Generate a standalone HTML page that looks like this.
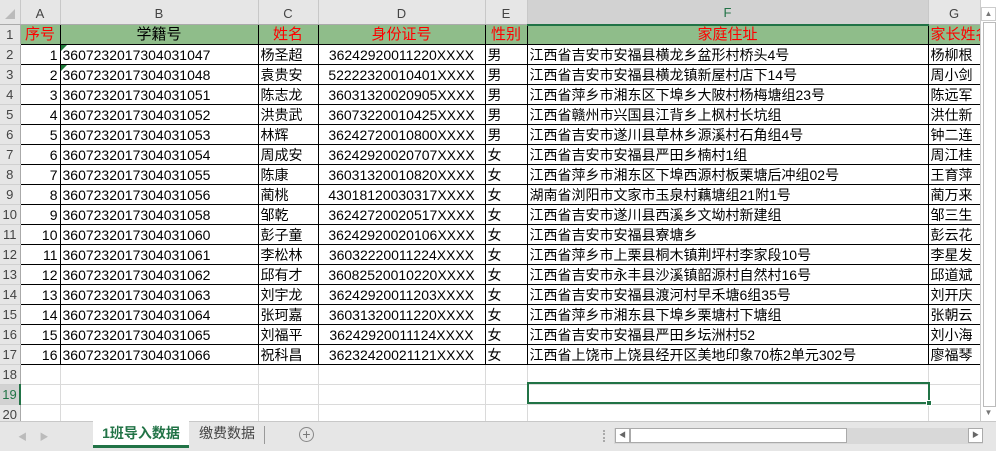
<!DOCTYPE html>
<html><head><meta charset="utf-8"><style>
*{margin:0;padding:0;box-sizing:border-box}
body{width:996px;height:451px;overflow:hidden;background:#fff;font-family:"Liberation Sans","Noto Sans CJK SC",sans-serif;position:relative}
table{position:absolute;left:0;top:0;border-collapse:collapse;table-layout:fixed;width:980px}
td{height:20px;font-size:14px;line-height:18px;white-space:nowrap;overflow:hidden;padding:0 2px;color:#000}
tr.ch td{height:23px;background:#e6e6e6;color:#444;text-align:center;font-size:13px;border-right:1px solid #c8c8c8;border-bottom:1px solid #aaa;padding-top:3px}
td.rh{background:#e6e6e6;color:#444;text-align:center;font-size:13px;padding:0;border-right:1px solid #aaa;border-bottom:1px solid #d0d0d0}
tr.h td{background:#8fbd8a;color:#f00;text-align:center;border:1px solid #000;font-size:15px}
tr.h td.rh{background:#e6e6e6;color:#444;border:none;border-right:1px solid #aaa;border-bottom:1px solid #d0d0d0;font-size:13px}
tr.d td{border:1px solid #000}
tr.d td.rh{border:none;border-right:1px solid #aaa;border-bottom:1px solid #d0d0d0}
tr.e td{border-right:1px solid #dadada;border-bottom:1px solid #dadada}
tr.e td.rh{border-right:1px solid #aaa;border-bottom:1px solid #d0d0d0}
.r{text-align:right}.c{text-align:center}
.tri{position:relative}
.tri:before{content:"";position:absolute;left:0;top:0;border-top:6px solid #1f7a3a;border-right:6px solid transparent}
</style></head><body>
<table>
<colgroup><col style="width:20px"><col style="width:40px"><col style="width:198px"><col style="width:60px"><col style="width:167px"><col style="width:42px"><col style="width:401px"><col style="width:52px"></colgroup>
<tr class="ch"><td style="background:#e6e6e6"><span style="display:inline-block;border-left:10px solid transparent;border-bottom:10px solid #bbb;margin-top:6px"></span></td><td>A</td><td>B</td><td>C</td><td>D</td><td>E</td><td style="background:#d2d2d2;border-bottom:2px solid #217346;color:#217346">F</td><td>G</td></tr>
<tr class="h"><td class="rh">1</td><td>序号</td><td style="color:#000">学籍号</td><td>姓名</td><td>身份证号</td><td>性别</td><td>家庭住址</td><td style="text-align:left">家长姓名</td></tr>
<tr class="d"><td class="rh">2</td><td class="r">1</td><td class="tri">3607232017304031047</td><td>杨圣超</td><td class="c">36242920011220XXXX</td><td>男</td><td>江西省吉安市安福县横龙乡盆形村桥头4号</td><td>杨柳根</td></tr>
<tr class="d"><td class="rh">3</td><td class="r">2</td><td class="tri">3607232017304031048</td><td>袁贵安</td><td class="c">52222320010401XXXX</td><td>男</td><td>江西省吉安市安福县横龙镇新屋村店下14号</td><td>周小剑</td></tr>
<tr class="d"><td class="rh">4</td><td class="r">3</td><td>3607232017304031051</td><td>陈志龙</td><td class="c">36031320020905XXXX</td><td>男</td><td>江西省萍乡市湘东区下埠乡大陂村杨梅塘组23号</td><td>陈远军</td></tr>
<tr class="d"><td class="rh">5</td><td class="r">4</td><td>3607232017304031052</td><td>洪贵武</td><td class="c">36073220010425XXXX</td><td>男</td><td>江西省赣州市兴国县江背乡上枫村长坑组</td><td>洪仕新</td></tr>
<tr class="d"><td class="rh">6</td><td class="r">5</td><td>3607232017304031053</td><td>林辉</td><td class="c">36242720010800XXXX</td><td>男</td><td>江西省吉安市遂川县草林乡源溪村石角组4号</td><td>钟二连</td></tr>
<tr class="d"><td class="rh">7</td><td class="r">6</td><td>3607232017304031054</td><td>周成安</td><td class="c">36242920020707XXXX</td><td>女</td><td>江西省吉安市安福县严田乡楠村1组</td><td>周江桂</td></tr>
<tr class="d"><td class="rh">8</td><td class="r">7</td><td>3607232017304031055</td><td>陈康</td><td class="c">36031320010820XXXX</td><td>女</td><td>江西省萍乡市湘东区下埠西源村板栗塘后冲组02号</td><td>王育萍</td></tr>
<tr class="d"><td class="rh">9</td><td class="r">8</td><td>3607232017304031056</td><td>蔺桃</td><td class="c">43018120030317XXXX</td><td>女</td><td>湖南省浏阳市文家市玉泉村藕塘组21附1号</td><td>蔺万来</td></tr>
<tr class="d"><td class="rh">10</td><td class="r">9</td><td>3607232017304031058</td><td>邹乾</td><td class="c">36242720020517XXXX</td><td>女</td><td>江西省吉安市遂川县西溪乡文坳村新建组</td><td>邹三生</td></tr>
<tr class="d"><td class="rh">11</td><td class="r">10</td><td>3607232017304031060</td><td>彭子童</td><td class="c">36242920020106XXXX</td><td>女</td><td>江西省吉安市安福县寮塘乡</td><td>彭云花</td></tr>
<tr class="d"><td class="rh">12</td><td class="r">11</td><td>3607232017304031061</td><td>李松林</td><td class="c">36032220011224XXXX</td><td>女</td><td>江西省萍乡市上栗县桐木镇荆坪村李家段10号</td><td>李星发</td></tr>
<tr class="d"><td class="rh">13</td><td class="r">12</td><td>3607232017304031062</td><td>邱有才</td><td class="c">36082520010220XXXX</td><td>女</td><td>江西省吉安市永丰县沙溪镇韶源村自然村16号</td><td>邱道斌</td></tr>
<tr class="d"><td class="rh">14</td><td class="r">13</td><td>3607232017304031063</td><td>刘宇龙</td><td class="c">36242920011203XXXX</td><td>女</td><td>江西省吉安市安福县渡河村早禾塘6组35号</td><td>刘开庆</td></tr>
<tr class="d"><td class="rh">15</td><td class="r">14</td><td>3607232017304031064</td><td>张珂嘉</td><td class="c">36031320011220XXXX</td><td>女</td><td>江西省萍乡市湘东县下埠乡栗塘村下塘组</td><td>张朝云</td></tr>
<tr class="d"><td class="rh">16</td><td class="r">15</td><td>3607232017304031065</td><td>刘福平</td><td class="c">36242920011124XXXX</td><td>女</td><td>江西省吉安市安福县严田乡坛洲村52</td><td>刘小海</td></tr>
<tr class="d"><td class="rh">17</td><td class="r">16</td><td>3607232017304031066</td><td>祝科昌</td><td class="c">36232420021121XXXX</td><td>女</td><td>江西省上饶市上饶县经开区美地印象70栋2单元302号</td><td>廖福琴</td></tr>
<tr class="e"><td class="rh">18</td><td></td><td></td><td></td><td></td><td></td><td></td><td></td></tr>
<tr class="e"><td class="rh" style="color:#217346;border-right:2px solid #217346;background:#d2d2d2">19</td><td></td><td></td><td></td><td></td><td></td><td></td><td></td></tr>
<tr class="e"><td class="rh">20</td><td></td><td></td><td></td><td></td><td></td><td></td><td></td></tr>
</table>
<div style="position:absolute;left:527px;top:382px;width:403px;height:22px;border:2px solid #217346"></div>
<div style="position:absolute;left:926px;top:400px;width:6px;height:6px;background:#217346;border:1px solid #fff"></div>
<div style="position:absolute;left:980px;top:0;width:16px;height:421px;background:#fff;border-left:1px solid #ccc"></div>
<div style="position:absolute;left:981px;top:7px;width:15px;height:14px;border:1px solid #ccc;background:#fff;font-size:8px;color:#777;text-align:center;line-height:12px">▲</div>
<div style="position:absolute;left:983px;top:22px;width:13px;height:385px;background:#fff;border:1px solid #bbb"></div>
<div style="position:absolute;left:981px;top:406px;width:15px;height:14px;font-size:8px;color:#777;text-align:center;line-height:14px">▼</div>
<div style="position:absolute;left:0;top:421px;width:996px;height:30px;background:#e6e6e6;border-top:1px solid #c8c8c8"></div>
<div style="position:absolute;left:18px;top:430px;font-size:9px;color:#bbb">◀&nbsp;&nbsp;&nbsp;&nbsp;&nbsp;▶</div>
<div style="position:absolute;left:93px;top:421px;width:96px;height:27px;background:#fff;border-bottom:3px solid #217346;color:#217346;font-weight:bold;font-size:14px;text-align:center;line-height:25px">1班导入数据</div>
<div style="position:absolute;left:189px;top:421px;width:76px;height:27px;color:#444;font-size:14px;text-align:center;line-height:25px">缴费数据</div>
<div style="position:absolute;left:264px;top:426px;width:1px;height:18px;background:#999"></div>
<div style="position:absolute;left:299px;top:427px;width:15px;height:15px;border:1px solid #888;border-radius:50%;color:#777;font-size:14px;line-height:12px;text-align:center">+</div>
<div style="position:absolute;left:614px;top:428px;width:369px;height:16px;background:#d8d8d8"></div>
<div style="position:absolute;left:615px;top:428px;width:15px;height:15px;background:#fff;border:1px solid #aaa;font-size:7px;color:#666;text-align:center;line-height:13px">◀</div>
<div style="position:absolute;left:630px;top:428px;width:217px;height:15px;background:#fff;border:1px solid #aaa"></div>
<div style="position:absolute;left:968px;top:428px;width:15px;height:15px;background:#fff;border:1px solid #aaa;font-size:7px;color:#666;text-align:center;line-height:13px">▶</div>
<div style="position:absolute;left:603px;top:430px;width:2px;height:12px;border-left:2px dotted #aaa"></div>
</body></html>
